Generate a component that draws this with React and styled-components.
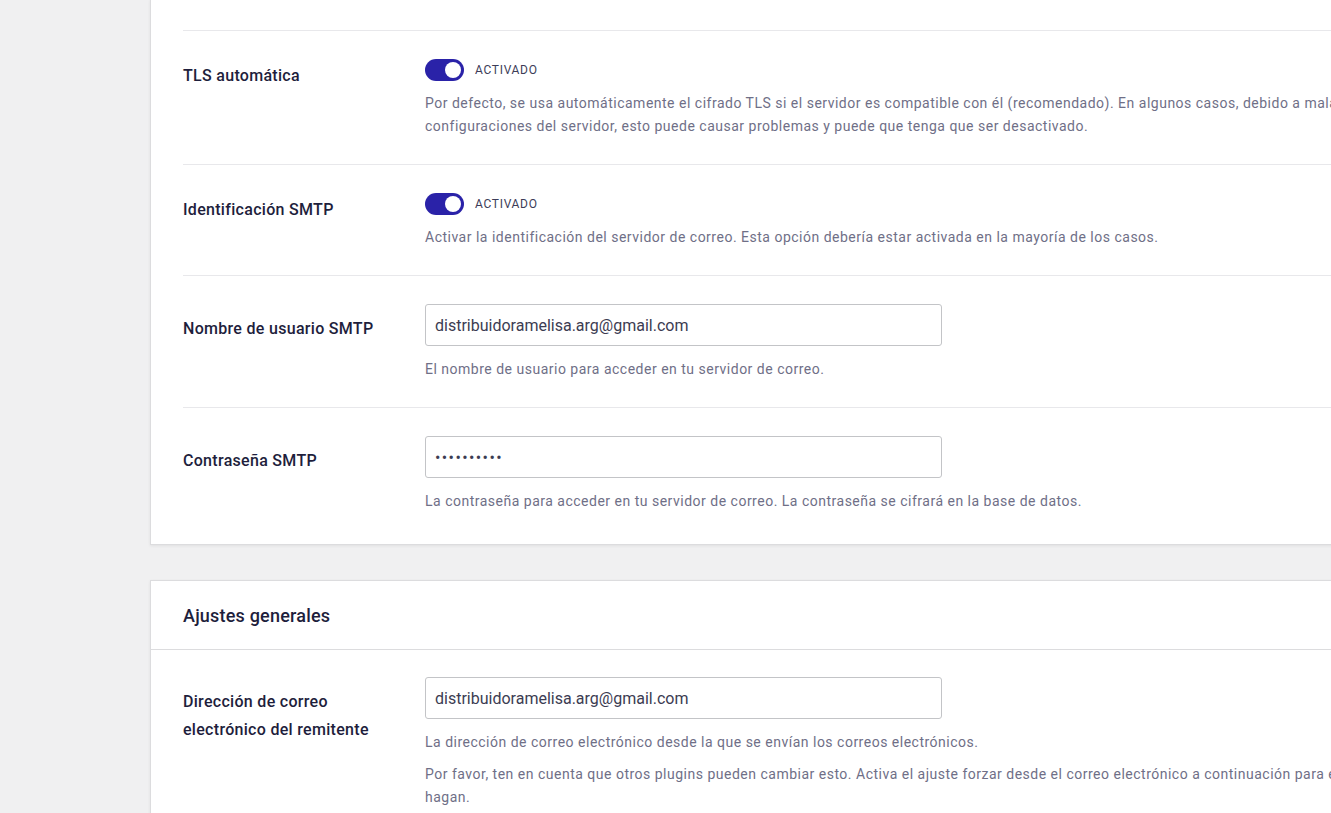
import React from "react";
import styled, {createGlobalStyle} from "styled-components";

const GlobalStyle = createGlobalStyle`
  html, body {
    margin: 0;
    padding: 0;
    background: #f0f0f1;
    overflow: hidden;
  }
  body {
    font-family: Roboto, "Liberation Sans", sans-serif;
  }
`

const App = () => {
    return (
        <Page>
            <GlobalStyle/>
            <Card top="-1px" lead="30px">
                <Row>
                    <Label offset="3px">TLS automática</Label>
                    <Field>
                        <ToggleLine>
                            <Switch on={true}><Knob/></Switch>
                            <SwitchText>Activado</SwitchText>
                        </ToggleLine>
                        <Desc>
                            Por defecto, se usa automáticamente el cifrado TLS si el servidor es compatible con él (recomendado). En algunos casos, debido a malas<br/>
                            configuraciones del servidor, esto puede causar problemas y puede que tenga que ser desactivado.
                        </Desc>
                    </Field>
                </Row>
                <Row>
                    <Label offset="3px">Identificación SMTP</Label>
                    <Field>
                        <ToggleLine>
                            <Switch on={true}><Knob/></Switch>
                            <SwitchText>Activado</SwitchText>
                        </ToggleLine>
                        <Desc>
                            Activar la identificación del servidor de correo. Esta opción debería estar activada en la mayoría de los casos.
                        </Desc>
                    </Field>
                </Row>
                <Row>
                    <Label offset="11px">Nombre de usuario SMTP</Label>
                    <Field>
                        <Input type="text" defaultValue="distribuidoramelisa.arg@gmail.com"/>
                        <Desc>El nombre de usuario para acceder en tu servidor de correo.</Desc>
                    </Field>
                </Row>
                <Row>
                    <Label offset="11px">Contraseña SMTP</Label>
                    <Field>
                        <Input type="password" defaultValue="contrasena"/>
                        <Desc>La contraseña para acceder en tu servidor de correo. La contraseña se cifrará en la base de datos.</Desc>
                    </Field>
                </Row>
            </Card>

            <Card top="35px">
                <CardHeader>Ajustes generales</CardHeader>
                <Row>
                    <Label offset="11px">Dirección de correo<br/>electrónico del remitente</Label>
                    <Field>
                        <Input type="text" defaultValue="distribuidoramelisa.arg@gmail.com"/>
                        <Desc>La dirección de correo electrónico desde la que se envían los correos electrónicos.</Desc>
                        <Desc>
                            Por favor, ten en cuenta que otros plugins pueden cambiar esto. Activa el ajuste forzar desde el correo electrónico a continuación para evitar que lo<br/>
                            hagan.
                        </Desc>
                    </Field>
                </Row>
            </Card>
        </Page>
    )
}

const Page = styled.div`
  padding-left: 150px;
  min-height: 100vh;
  overflow: hidden;
`

const Card = styled.div`
  width: 1400px;
  margin-top: ${(p) => p.top};
  padding-top: ${(p) => p.lead || "0"};
  padding-bottom: 5px;
  background: #fff;
  border: 1px solid #dcdcde;
  box-shadow: 0 1px 3px rgba(0, 0, 0, 0.07);
`

const CardHeader = styled.div`
  padding: 24px 32px 22px;
  font-size: 18px;
  line-height: 22px;
  font-weight: 500;
  letter-spacing: 0.2px;
  color: #1e1e3c;
  border-bottom: 1px solid #dcdcde;
`

const Row = styled.div`
  display: grid;
  grid-template-columns: 242px 1fr;
  margin: 0 32px;
  padding: 28px 0 26px;
  border-top: 1px solid #e8e8eb;

  ${CardHeader} + & {
    border-top: none;
    padding-top: 27px;
  }
`

const Label = styled.div`
  padding-top: ${(p) => p.offset};
  font-size: 16px;
  line-height: 28px;
  font-weight: 500;
  letter-spacing: 0.3px;
  color: #1e1e3c;
`

const Field = styled.div`
  display: flex;
  flex-direction: column;
  align-items: flex-start;
`

const ToggleLine = styled.div`
  display: flex;
  align-items: center;
  gap: 11px;
  height: 22px;
`

const Switch = styled.div`
  position: relative;
  width: 39px;
  height: 22px;
  border-radius: 11px;
  background: ${(p) => (p.on ? "#2a22a8" : "#c3c4c7")};
`

const Knob = styled.span`
  position: absolute;
  top: 3px;
  right: 3px;
  width: 16px;
  height: 16px;
  border-radius: 50%;
  background: #fff;
`

const SwitchText = styled.span`
  font-size: 12px;
  font-weight: 400;
  letter-spacing: 0.7px;
  text-transform: uppercase;
  color: #3c3c58;
`

const Input = styled.input`
  box-sizing: border-box;
  width: 517px;
  height: 42px;
  padding: 0 9px;
  border: 1px solid #c3c4c7;
  border-radius: 3px;
  font-family: Roboto, "Liberation Sans", sans-serif;
  font-size: 16px;
  color: #3c3c52;
  outline: none;

  &[type="password"] {
    letter-spacing: 1.4px;
  }
`

const Desc = styled.p`
  margin: 11px 0 0;
  font-size: 14px;
  line-height: 23px;
  letter-spacing: 0.5px;
  color: #6f6f87;
  white-space: nowrap;

  ${Input} + & {
    margin-top: 12px;
  }
  & + & {
    margin-top: 9px;
  }
`

export default App;
